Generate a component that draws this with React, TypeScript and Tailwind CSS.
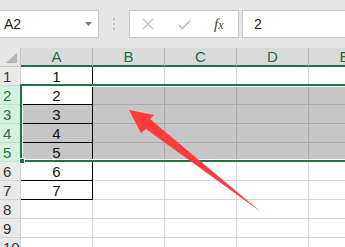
import React from 'react';

const COLS = ['A', 'B', 'C', 'D', 'E'];
const ROWS = [1, 2, 3, 4, 5, 6, 7, 8, 9, 10];
const VALUES: Record<number, string> = { 1: '1', 2: '2', 3: '3', 4: '4', 5: '5', 6: '6', 7: '7' };

const isSelRow = (r: number) => r >= 2 && r <= 5;

function Cell({ row, col }: { row: number; col: number }) {
  const selected = isSelRow(row) && !(row === 2 && col === 0);
  const boxed = col === 0 && row <= 7;
  const line = boxed ? 'border-black' : isSelRow(row) ? 'border-[#a9a9a9]' : 'border-[#d6d6d6]';
  const bg = selected ? 'bg-[#c6c6c6]' : 'bg-white';
  return (
    <div
      className={`flex h-[19px] w-[72px] shrink-0 items-center justify-center border-b border-r text-[15px] leading-none text-[#111] ${line} ${bg}`}
    >
      {col === 0 ? VALUES[row] : ''}
    </div>
  );
}

function Toolbar() {
  return (
    <div className="flex h-[48px] items-start bg-[#e6e6e6] pt-[10px]">
      <div className="flex h-[28px] w-[99px] shrink-0 items-center justify-between border border-l-0 border-[#c6c6c6] bg-white pl-[4px] pr-[6px]">
        <span className="text-[14px] text-[#222]">A2</span>
        <svg width="7" height="4" viewBox="0 0 7 4">
          <polygon points="0,0 7,0 3.5,4" fill="#7a7a7a" />
        </svg>
      </div>
      <div className="flex h-[28px] w-[30px] shrink-0 flex-col items-center justify-center gap-[3px]">
        <span className="h-[2px] w-[2px] bg-[#bcbcbc]" />
        <span className="h-[2px] w-[2px] bg-[#bcbcbc]" />
        <span className="h-[2px] w-[2px] bg-[#bcbcbc]" />
      </div>
      <div className="flex h-[28px] w-[110px] shrink-0 items-center border border-[#c6c6c6] bg-white">
        <svg className="ml-[12px]" width="12" height="12" viewBox="0 0 12 12">
          <path d="M1 1 L11 11 M11 1 L1 11" stroke="#bdbdbd" strokeWidth="1.4" />
        </svg>
        <svg className="ml-[24px]" width="13" height="11" viewBox="0 0 13 11">
          <path d="M1 6 L4.5 9.5 L12 1.5" stroke="#bdbdbd" strokeWidth="1.6" fill="none" />
        </svg>
        <span className="ml-[23px] font-['Liberation_Serif',serif] text-[15px] italic leading-none text-[#444]">
          f<span className="text-[12px]">x</span>
        </span>
      </div>
      <div className="ml-[3px] flex h-[28px] flex-1 items-center border border-r-0 border-[#c6c6c6] bg-white pl-[11px]">
        <span className="text-[14px] text-[#222]">2</span>
      </div>
    </div>
  );
}

function HeaderRow() {
  return (
    <div className="flex h-[19px]">
      <div className="relative w-[21px] shrink-0 border-b border-r border-[#c6c6c6] bg-[#e6e6e6]">
        <svg className="absolute bottom-[3px] right-[3px]" width="11" height="10" viewBox="0 0 11 10">
          <polygon points="11,0 11,10 0,10" fill="#b5b5b5" />
        </svg>
      </div>
      {COLS.map((c) => (
        <div
          key={c}
          className="flex w-[72px] shrink-0 items-end justify-center border-b-2 border-r border-b-[#217346] border-r-[#b8b8b8] bg-[#dadada] text-[15px] leading-[17px] text-[#1e6b43]"
        >
          {c}
        </div>
      ))}
    </div>
  );
}

export default function App() {
  return (
    <div className="relative h-[247px] w-[345px] overflow-hidden bg-white font-['Liberation_Sans',Arial,sans-serif]">
      <Toolbar />
      <HeaderRow />
      {ROWS.map((r) => (
        <div key={r} className="flex">
          <div
            className={`flex h-[19px] w-[21px] shrink-0 items-center border-b border-r pl-[3px] text-[15px] leading-none ${
              isSelRow(r)
                ? 'border-[#bfe0cc] bg-[#d3f0e0] text-[#217346]'
                : 'border-[#d2d2d2] bg-[#e9e9e9] text-[#333]'
            }`}
          >
            {r}
          </div>
          {COLS.map((c, i) => (
            <Cell key={c} row={r} col={i} />
          ))}
        </div>
      ))}

      {/* selection frame A2:E5 */}
      <div className="absolute left-[20px] top-[84px] h-[78px] w-[340px] border-2 border-[#217346]">
        <div className="h-full w-full border border-white" />
      </div>
      <div className="absolute left-[19px] top-[158px] h-[6px] w-[6px] border border-white bg-[#217346]" />

      <svg className="absolute left-0 top-0" width="345" height="247" viewBox="0 0 345 247">
        <polygon
          points="129,110 154,115 150,119 261,212 146,129 141,133"
          fill="#ff3c3c"
        />
      </svg>
    </div>
  );
}
